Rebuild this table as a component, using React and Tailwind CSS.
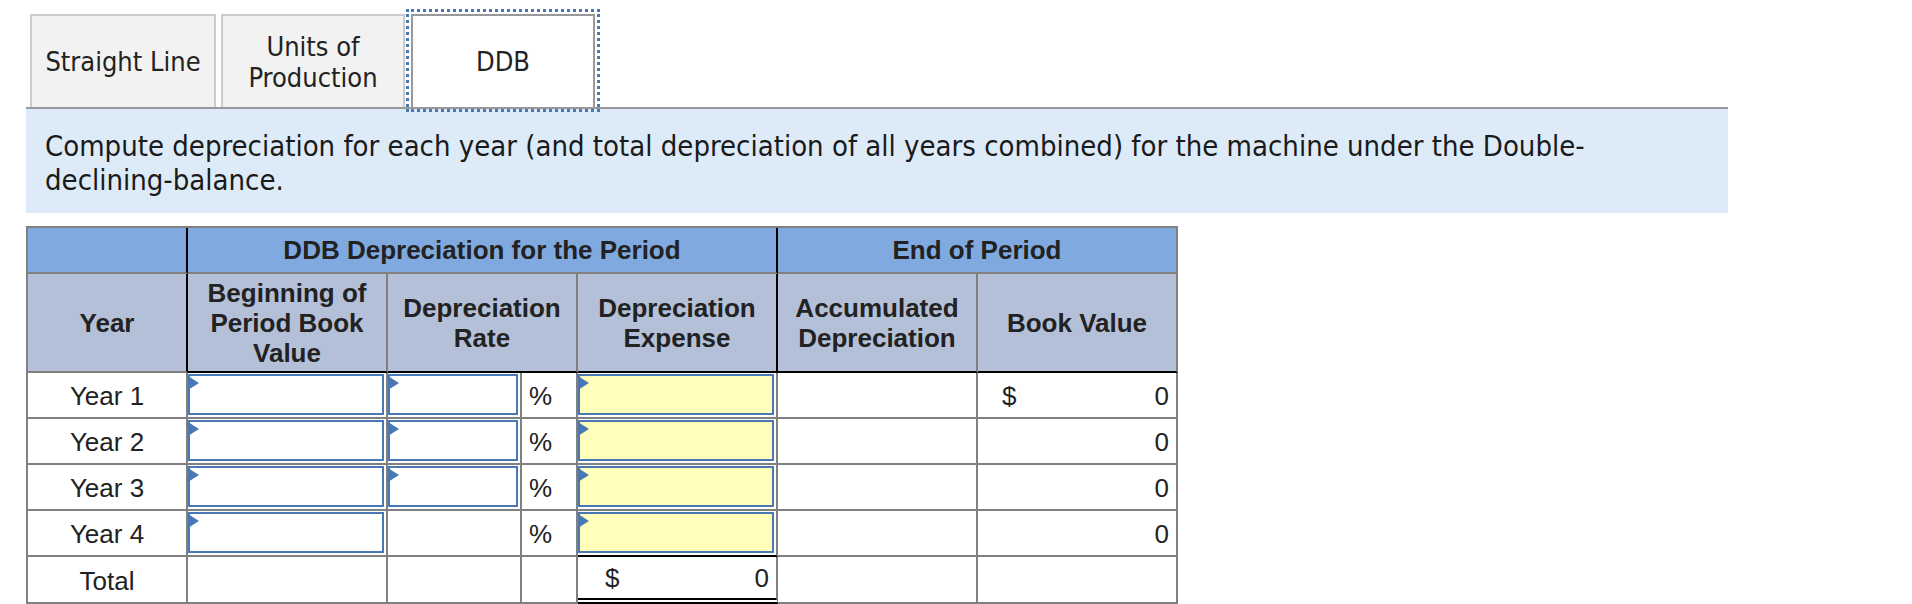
const tabFont = "font-['DejaVu_Sans_Condensed','DejaVu_Sans',sans-serif] font-stretch-condensed";
const tblFont = "font-['Liberation_Sans',Arial,sans-serif]";

function Flag() {
  return (
    <svg className="absolute -left-[2px] top-0" width="11" height="14" viewBox="0 0 11 14">
      <polygon points="0,0 11,7 0,14" fill="#4a78b4" />
    </svg>
  );
}

function InputBox({ yellow }) {
  return (
    <div className="h-full pt-px pr-[2px] pb-[2px]">
      <div className={`relative h-full border-2 border-[#4a78b4] ${yellow ? 'bg-[#ffffbb]' : 'bg-white'}`}>
        <Flag />
      </div>
    </div>
  );
}

const g = 'border-r-2 border-b-2 border-[#808080]';

export default function App() {
  const rows = ['Year 1', 'Year 2', 'Year 3', 'Year 4'];

  return (
    <div className="min-h-screen bg-white text-[#222] pl-[26px]">
      <div className="w-[1702px]">
        {/* tabs */}
        <div className={`flex items-end pt-[14px] pl-[4px] border-b-2 border-[#999] ${tabFont} text-[27px] leading-[31px]`}>
          <div className="w-[186px] h-[93px] flex items-center justify-center text-center bg-[#f2f2f2] border-2 border-b-0 border-[#ccc]">
            Straight Line
          </div>
          <div className="ml-[5px] w-[184px] h-[93px] flex items-center justify-center text-center bg-[#f2f2f2] border-2 border-b-0 border-[#ccc]">
            Units of
            <br />
            Production
          </div>
          <div className="ml-[6px] w-[184px] h-[93px] flex items-center justify-center text-center bg-white border-2 border-b-0 border-[#999] outline-[3px] outline-dotted outline-offset-2 outline-[#4a78b4]">
            DDB
          </div>
        </div>

        {/* instructions */}
        <div className={`bg-[#ddeaf7] pl-[19px] pt-[20px] pb-[16px] ${tabFont} text-[29px] leading-[34px] text-[#1a1a1a]`}>
          Compute depreciation for each year (and total depreciation of all years combined) for the machine under the Double-
          <br />
          declining-balance.
        </div>
      </div>

      {/* table */}
      <div
        className={`mt-[13px] w-[1152px] grid grid-cols-[160px_200px_134px_56px_200px_200px_200px] grid-rows-[46px_99px_46px_46px_46px_46px_47px] border-l-2 border-t-2 border-[#808080] ${tblFont} text-[26px] leading-[30px] text-[#222]`}
      >
        {/* header row 1 */}
        <div className="border-r-2 border-b-2 border-r-black border-b-[#808080] bg-[#80aadf]" />
        <div className="col-span-4 border-r-2 border-b-2 border-r-black border-b-[#808080] bg-[#80aadf] flex items-center justify-center font-bold">
          DDB Depreciation for the Period
        </div>
        <div className={`col-span-2 ${g} bg-[#80aadf] flex items-center justify-center font-bold`}>End of Period</div>

        {/* header row 2 */}
        <div className="border-r-2 border-b-2 border-r-black border-b-[#808080] bg-[#b4c0d8] flex items-center justify-center font-bold">
          Year
        </div>
        <div className="border-r-2 border-b-2 border-r-[#808080] border-b-black bg-[#b4c0d8] flex items-center justify-center text-center font-bold">
          Beginning of
          <br />
          Period Book
          <br />
          Value
        </div>
        <div className="col-span-2 border-r-2 border-b-2 border-r-[#808080] border-b-black bg-[#b4c0d8] flex items-center justify-center text-center font-bold">
          Depreciation
          <br />
          Rate
        </div>
        <div className="border-r-2 border-b-2 border-black bg-[#b4c0d8] flex items-center justify-center text-center font-bold">
          Depreciation
          <br />
          Expense
        </div>
        <div className="border-r-2 border-b-2 border-r-[#808080] border-b-black bg-[#b4c0d8] flex items-center justify-center text-center font-bold">
          Accumulated
          <br />
          Depreciation
        </div>
        <div className="border-r-2 border-b-2 border-r-[#808080] border-b-black bg-[#b4c0d8] flex items-center justify-center font-bold">
          Book Value
        </div>

        {/* data rows */}
        {rows.map((r, i) => [
          <div key={r + 'a'} className={`${g} flex items-center justify-center pt-[2px]`}>{r}</div>,
          <div key={r + 'b'} className={g}>
            <InputBox />
          </div>,
          <div key={r + 'c'} className={g}>{i < 3 && <InputBox />}</div>,
          <div key={r + 'd'} className={`${g} flex items-center pl-[7px] pt-[2px]`}>%</div>,
          <div
            key={r + 'e'}
            className={`border-r-2 border-b-2 border-r-[#808080] ${i === 3 ? 'border-b-black' : 'border-b-[#808080]'}`}
          >
            <InputBox yellow />
          </div>,
          <div key={r + 'f'} className={g} />,
          <div key={r + 'g'} className={`${g} flex items-center justify-between pl-[24px] pr-[7px] pt-[2px]`}>
            <span>{i === 0 ? '$' : ''}</span>
            <span>0</span>
          </div>,
        ])}

        {/* total row */}
        <div className={`${g} flex items-center justify-center pt-[2px]`}>Total</div>
        <div className={g} />
        <div className={g} />
        <div className={g} />
        <div className="border-r-2 border-r-[#808080] border-b-[6px] border-double border-b-black flex items-center justify-between pl-[27px] pr-[7px]">
          <span>$</span>
          <span>0</span>
        </div>
        <div className={g} />
        <div className={g} />
      </div>
    </div>
  );
}
